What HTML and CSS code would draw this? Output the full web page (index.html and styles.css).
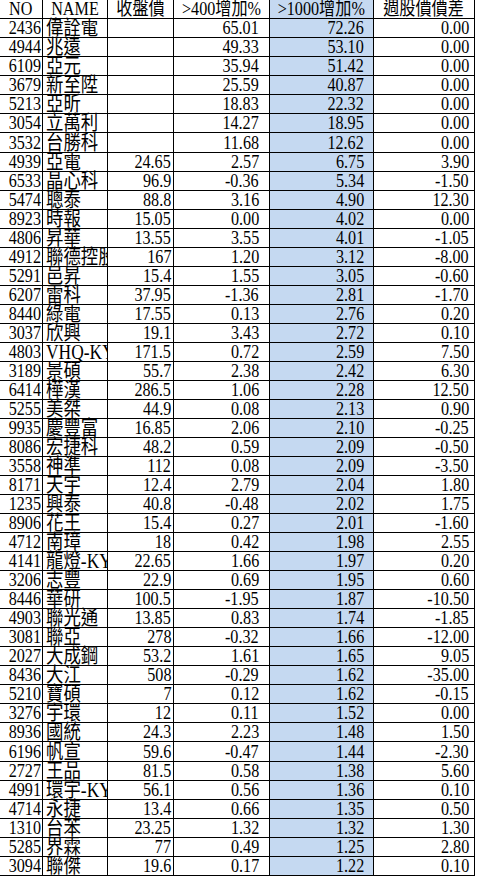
FILE: index.html
```html
<!DOCTYPE html>
<html lang="zh-Hant">
<head>
<meta charset="utf-8">
<title>增加%</title>
<link rel="stylesheet" href="styles.css">
</head>
<body>
<table class="grid">
<colgroup>
<col class="w-no"><col class="w-name"><col class="w-close"><col class="w-p400"><col class="w-p1000"><col class="w-diff">
</colgroup>
<thead>
<tr><th><span class="t">NO</span></th><th><span class="t">NAME</span></th><th><span class="t">收盤價</span></th><th><span class="t">&gt;400增加%</span></th><th class="blue"><span class="t">&gt;1000增加%</span></th><th><span class="t">週股價價差</span></th></tr>
</thead>
<tbody>
<tr><td class="no"><span class="t">2436</span></td><td class="name"><span class="t">偉詮電</span></td><td class="close"></td><td class="p400"><span class="t">65.01</span></td><td class="p1000"><span class="t">72.26</span></td><td class="diff"><span class="t">0.00</span></td></tr>
<tr><td class="no"><span class="t">4944</span></td><td class="name"><span class="t">兆遠</span></td><td class="close"></td><td class="p400"><span class="t">49.33</span></td><td class="p1000"><span class="t">53.10</span></td><td class="diff"><span class="t">0.00</span></td></tr>
<tr><td class="no"><span class="t">6109</span></td><td class="name"><span class="t">亞元</span></td><td class="close"></td><td class="p400"><span class="t">35.94</span></td><td class="p1000"><span class="t">51.42</span></td><td class="diff"><span class="t">0.00</span></td></tr>
<tr><td class="no"><span class="t">3679</span></td><td class="name"><span class="t">新至陞</span></td><td class="close"></td><td class="p400"><span class="t">25.59</span></td><td class="p1000"><span class="t">40.87</span></td><td class="diff"><span class="t">0.00</span></td></tr>
<tr><td class="no"><span class="t">5213</span></td><td class="name"><span class="t">亞昕</span></td><td class="close"></td><td class="p400"><span class="t">18.83</span></td><td class="p1000"><span class="t">22.32</span></td><td class="diff"><span class="t">0.00</span></td></tr>
<tr><td class="no"><span class="t">3054</span></td><td class="name"><span class="t">立萬利</span></td><td class="close"></td><td class="p400"><span class="t">14.27</span></td><td class="p1000"><span class="t">18.95</span></td><td class="diff"><span class="t">0.00</span></td></tr>
<tr><td class="no"><span class="t">3532</span></td><td class="name"><span class="t">台勝科</span></td><td class="close"></td><td class="p400"><span class="t">11.68</span></td><td class="p1000"><span class="t">12.62</span></td><td class="diff"><span class="t">0.00</span></td></tr>
<tr><td class="no"><span class="t">4939</span></td><td class="name"><span class="t">亞電</span></td><td class="close"><span class="t">24.65</span></td><td class="p400"><span class="t">2.57</span></td><td class="p1000"><span class="t">6.75</span></td><td class="diff"><span class="t">3.90</span></td></tr>
<tr><td class="no"><span class="t">6533</span></td><td class="name"><span class="t">晶心科</span></td><td class="close"><span class="t">96.9</span></td><td class="p400"><span class="t">-0.36</span></td><td class="p1000"><span class="t">5.34</span></td><td class="diff"><span class="t">-1.50</span></td></tr>
<tr><td class="no"><span class="t">5474</span></td><td class="name"><span class="t">聰泰</span></td><td class="close"><span class="t">88.8</span></td><td class="p400"><span class="t">3.16</span></td><td class="p1000"><span class="t">4.90</span></td><td class="diff"><span class="t">12.30</span></td></tr>
<tr><td class="no"><span class="t">8923</span></td><td class="name"><span class="t">時報</span></td><td class="close"><span class="t">15.05</span></td><td class="p400"><span class="t">0.00</span></td><td class="p1000"><span class="t">4.02</span></td><td class="diff"><span class="t">0.00</span></td></tr>
<tr><td class="no"><span class="t">4806</span></td><td class="name"><span class="t">昇華</span></td><td class="close"><span class="t">13.55</span></td><td class="p400"><span class="t">3.55</span></td><td class="p1000"><span class="t">4.01</span></td><td class="diff"><span class="t">-1.05</span></td></tr>
<tr><td class="no"><span class="t">4912</span></td><td class="name clip"><span class="t">聯德控股</span></td><td class="close"><span class="t">167</span></td><td class="p400"><span class="t">1.20</span></td><td class="p1000"><span class="t">3.12</span></td><td class="diff"><span class="t">-8.00</span></td></tr>
<tr><td class="no"><span class="t">5291</span></td><td class="name"><span class="t">邑昇</span></td><td class="close"><span class="t">15.4</span></td><td class="p400"><span class="t">1.55</span></td><td class="p1000"><span class="t">3.05</span></td><td class="diff"><span class="t">-0.60</span></td></tr>
<tr><td class="no"><span class="t">6207</span></td><td class="name"><span class="t">雷科</span></td><td class="close"><span class="t">37.95</span></td><td class="p400"><span class="t">-1.36</span></td><td class="p1000"><span class="t">2.81</span></td><td class="diff"><span class="t">-1.70</span></td></tr>
<tr><td class="no"><span class="t">8440</span></td><td class="name"><span class="t">綠電</span></td><td class="close"><span class="t">17.55</span></td><td class="p400"><span class="t">0.13</span></td><td class="p1000"><span class="t">2.76</span></td><td class="diff"><span class="t">0.20</span></td></tr>
<tr><td class="no"><span class="t">3037</span></td><td class="name"><span class="t">欣興</span></td><td class="close"><span class="t">19.1</span></td><td class="p400"><span class="t">3.43</span></td><td class="p1000"><span class="t">2.72</span></td><td class="diff"><span class="t">0.10</span></td></tr>
<tr><td class="no"><span class="t">4803</span></td><td class="name clip"><span class="t">VHQ-KY</span></td><td class="close"><span class="t">171.5</span></td><td class="p400"><span class="t">0.72</span></td><td class="p1000"><span class="t">2.59</span></td><td class="diff"><span class="t">7.50</span></td></tr>
<tr><td class="no"><span class="t">3189</span></td><td class="name"><span class="t">景碩</span></td><td class="close"><span class="t">55.7</span></td><td class="p400"><span class="t">2.38</span></td><td class="p1000"><span class="t">2.42</span></td><td class="diff"><span class="t">6.30</span></td></tr>
<tr><td class="no"><span class="t">6414</span></td><td class="name"><span class="t">樺漢</span></td><td class="close"><span class="t">286.5</span></td><td class="p400"><span class="t">1.06</span></td><td class="p1000"><span class="t">2.28</span></td><td class="diff"><span class="t">12.50</span></td></tr>
<tr><td class="no"><span class="t">5255</span></td><td class="name"><span class="t">美桀</span></td><td class="close"><span class="t">44.9</span></td><td class="p400"><span class="t">0.08</span></td><td class="p1000"><span class="t">2.13</span></td><td class="diff"><span class="t">0.90</span></td></tr>
<tr><td class="no"><span class="t">9935</span></td><td class="name"><span class="t">慶豐富</span></td><td class="close"><span class="t">16.85</span></td><td class="p400"><span class="t">2.06</span></td><td class="p1000"><span class="t">2.10</span></td><td class="diff"><span class="t">-0.25</span></td></tr>
<tr><td class="no"><span class="t">8086</span></td><td class="name"><span class="t">宏捷科</span></td><td class="close"><span class="t">48.2</span></td><td class="p400"><span class="t">0.59</span></td><td class="p1000"><span class="t">2.09</span></td><td class="diff"><span class="t">-0.50</span></td></tr>
<tr><td class="no"><span class="t">3558</span></td><td class="name"><span class="t">神準</span></td><td class="close"><span class="t">112</span></td><td class="p400"><span class="t">0.08</span></td><td class="p1000"><span class="t">2.09</span></td><td class="diff"><span class="t">-3.50</span></td></tr>
<tr><td class="no"><span class="t">8171</span></td><td class="name"><span class="t">天宇</span></td><td class="close"><span class="t">12.4</span></td><td class="p400"><span class="t">2.79</span></td><td class="p1000"><span class="t">2.04</span></td><td class="diff"><span class="t">1.80</span></td></tr>
<tr><td class="no"><span class="t">1235</span></td><td class="name"><span class="t">興泰</span></td><td class="close"><span class="t">40.8</span></td><td class="p400"><span class="t">-0.48</span></td><td class="p1000"><span class="t">2.02</span></td><td class="diff"><span class="t">1.75</span></td></tr>
<tr><td class="no"><span class="t">8906</span></td><td class="name"><span class="t">花王</span></td><td class="close"><span class="t">15.4</span></td><td class="p400"><span class="t">0.27</span></td><td class="p1000"><span class="t">2.01</span></td><td class="diff"><span class="t">-1.60</span></td></tr>
<tr><td class="no"><span class="t">4712</span></td><td class="name"><span class="t">南璋</span></td><td class="close"><span class="t">18</span></td><td class="p400"><span class="t">0.42</span></td><td class="p1000"><span class="t">1.98</span></td><td class="diff"><span class="t">2.55</span></td></tr>
<tr><td class="no"><span class="t">4141</span></td><td class="name clip"><span class="t">龍燈-KY</span></td><td class="close"><span class="t">22.65</span></td><td class="p400"><span class="t">1.66</span></td><td class="p1000"><span class="t">1.97</span></td><td class="diff"><span class="t">0.20</span></td></tr>
<tr><td class="no"><span class="t">3206</span></td><td class="name"><span class="t">志豐</span></td><td class="close"><span class="t">22.9</span></td><td class="p400"><span class="t">0.69</span></td><td class="p1000"><span class="t">1.95</span></td><td class="diff"><span class="t">0.60</span></td></tr>
<tr><td class="no"><span class="t">8446</span></td><td class="name"><span class="t">華研</span></td><td class="close"><span class="t">100.5</span></td><td class="p400"><span class="t">-1.95</span></td><td class="p1000"><span class="t">1.87</span></td><td class="diff"><span class="t">-10.50</span></td></tr>
<tr><td class="no"><span class="t">4903</span></td><td class="name"><span class="t">聯光通</span></td><td class="close"><span class="t">13.85</span></td><td class="p400"><span class="t">0.83</span></td><td class="p1000"><span class="t">1.74</span></td><td class="diff"><span class="t">-1.85</span></td></tr>
<tr><td class="no"><span class="t">3081</span></td><td class="name"><span class="t">聯亞</span></td><td class="close"><span class="t">278</span></td><td class="p400"><span class="t">-0.32</span></td><td class="p1000"><span class="t">1.66</span></td><td class="diff"><span class="t">-12.00</span></td></tr>
<tr><td class="no"><span class="t">2027</span></td><td class="name"><span class="t">大成鋼</span></td><td class="close"><span class="t">53.2</span></td><td class="p400"><span class="t">1.61</span></td><td class="p1000"><span class="t">1.65</span></td><td class="diff"><span class="t">9.05</span></td></tr>
<tr><td class="no"><span class="t">8436</span></td><td class="name"><span class="t">大江</span></td><td class="close"><span class="t">508</span></td><td class="p400"><span class="t">-0.29</span></td><td class="p1000"><span class="t">1.62</span></td><td class="diff"><span class="t">-35.00</span></td></tr>
<tr><td class="no"><span class="t">5210</span></td><td class="name"><span class="t">寶碩</span></td><td class="close"><span class="t">7</span></td><td class="p400"><span class="t">0.12</span></td><td class="p1000"><span class="t">1.62</span></td><td class="diff"><span class="t">-0.15</span></td></tr>
<tr><td class="no"><span class="t">3276</span></td><td class="name"><span class="t">宇環</span></td><td class="close"><span class="t">12</span></td><td class="p400"><span class="t">0.11</span></td><td class="p1000"><span class="t">1.52</span></td><td class="diff"><span class="t">0.00</span></td></tr>
<tr><td class="no"><span class="t">8936</span></td><td class="name"><span class="t">國統</span></td><td class="close"><span class="t">24.3</span></td><td class="p400"><span class="t">2.23</span></td><td class="p1000"><span class="t">1.48</span></td><td class="diff"><span class="t">1.50</span></td></tr>
<tr><td class="no"><span class="t">6196</span></td><td class="name"><span class="t">帆宣</span></td><td class="close"><span class="t">59.6</span></td><td class="p400"><span class="t">-0.47</span></td><td class="p1000"><span class="t">1.44</span></td><td class="diff"><span class="t">-2.30</span></td></tr>
<tr><td class="no"><span class="t">2727</span></td><td class="name"><span class="t">王品</span></td><td class="close"><span class="t">81.5</span></td><td class="p400"><span class="t">0.58</span></td><td class="p1000"><span class="t">1.38</span></td><td class="diff"><span class="t">5.60</span></td></tr>
<tr><td class="no"><span class="t">4991</span></td><td class="name clip"><span class="t">環宇-KY</span></td><td class="close"><span class="t">56.1</span></td><td class="p400"><span class="t">0.56</span></td><td class="p1000"><span class="t">1.36</span></td><td class="diff"><span class="t">0.10</span></td></tr>
<tr><td class="no"><span class="t">4714</span></td><td class="name"><span class="t">永捷</span></td><td class="close"><span class="t">13.4</span></td><td class="p400"><span class="t">0.66</span></td><td class="p1000"><span class="t">1.35</span></td><td class="diff"><span class="t">0.50</span></td></tr>
<tr><td class="no"><span class="t">1310</span></td><td class="name"><span class="t">台苯</span></td><td class="close"><span class="t">23.25</span></td><td class="p400"><span class="t">1.32</span></td><td class="p1000"><span class="t">1.32</span></td><td class="diff"><span class="t">1.30</span></td></tr>
<tr><td class="no"><span class="t">5285</span></td><td class="name"><span class="t">界霖</span></td><td class="close"><span class="t">77</span></td><td class="p400"><span class="t">0.49</span></td><td class="p1000"><span class="t">1.25</span></td><td class="diff"><span class="t">2.80</span></td></tr>
<tr><td class="no"><span class="t">3094</span></td><td class="name"><span class="t">聯傑</span></td><td class="close"><span class="t">19.6</span></td><td class="p400"><span class="t">0.17</span></td><td class="p1000"><span class="t">1.22</span></td><td class="diff"><span class="t">0.10</span></td></tr>
</tbody>
</table>
</body>
</html>
```

FILE: styles.css
```css
html, body {
  margin: 0;
  padding: 0;
  background: #ffffff;
}

.grid {
  width: 475px;
  table-layout: fixed;
  border-collapse: separate;
  border-spacing: 0;
  font-family: "Liberation Serif", "Noto Sans CJK TC", serif;
  font-size: 19px;
  color: #000000;
}

.w-no { width: 43px; }
.w-name { width: 65px; }
.w-close { width: 66px; }
.w-p400 { width: 96px; }
.w-p1000 { width: 104px; }
.w-diff { width: 101px; }

.grid th,
.grid td {
  box-sizing: content-box;
  height: 18.04px;
  padding: 0;
  border-right: 1px solid #000000;
  border-bottom: 1px solid #000000;
  line-height: 18px;
  white-space: nowrap;
  vertical-align: bottom;
  font-weight: normal;
}

.grid th {
  height: 18.3px;
  text-align: center;
}

.t {
  display: inline-block;
  transform: scaleX(0.85);
}

.grid th .t {
  transform-origin: center bottom;
}

.blue,
.grid td.p1000 {
  background: #c5d9f1;
}

.grid td .t {
  transform-origin: right bottom;
}

.grid td.no {
  text-align: right;
  padding-right: 1px;
}

.grid td.name {
  text-align: left;
  padding-left: 3px;
  font-size: 20.5px;
}

.grid td.name .t {
  transform-origin: left bottom;
}

.grid td.clip {
  overflow-x: clip;
}

.grid td.close {
  text-align: right;
  padding-right: 2px;
}

.grid td.p400 {
  text-align: right;
  padding-right: 10px;
}

.grid td.p1000 {
  text-align: right;
  padding-right: 9px;
}

.grid td.diff {
  text-align: right;
  padding-right: 5px;
}
```
